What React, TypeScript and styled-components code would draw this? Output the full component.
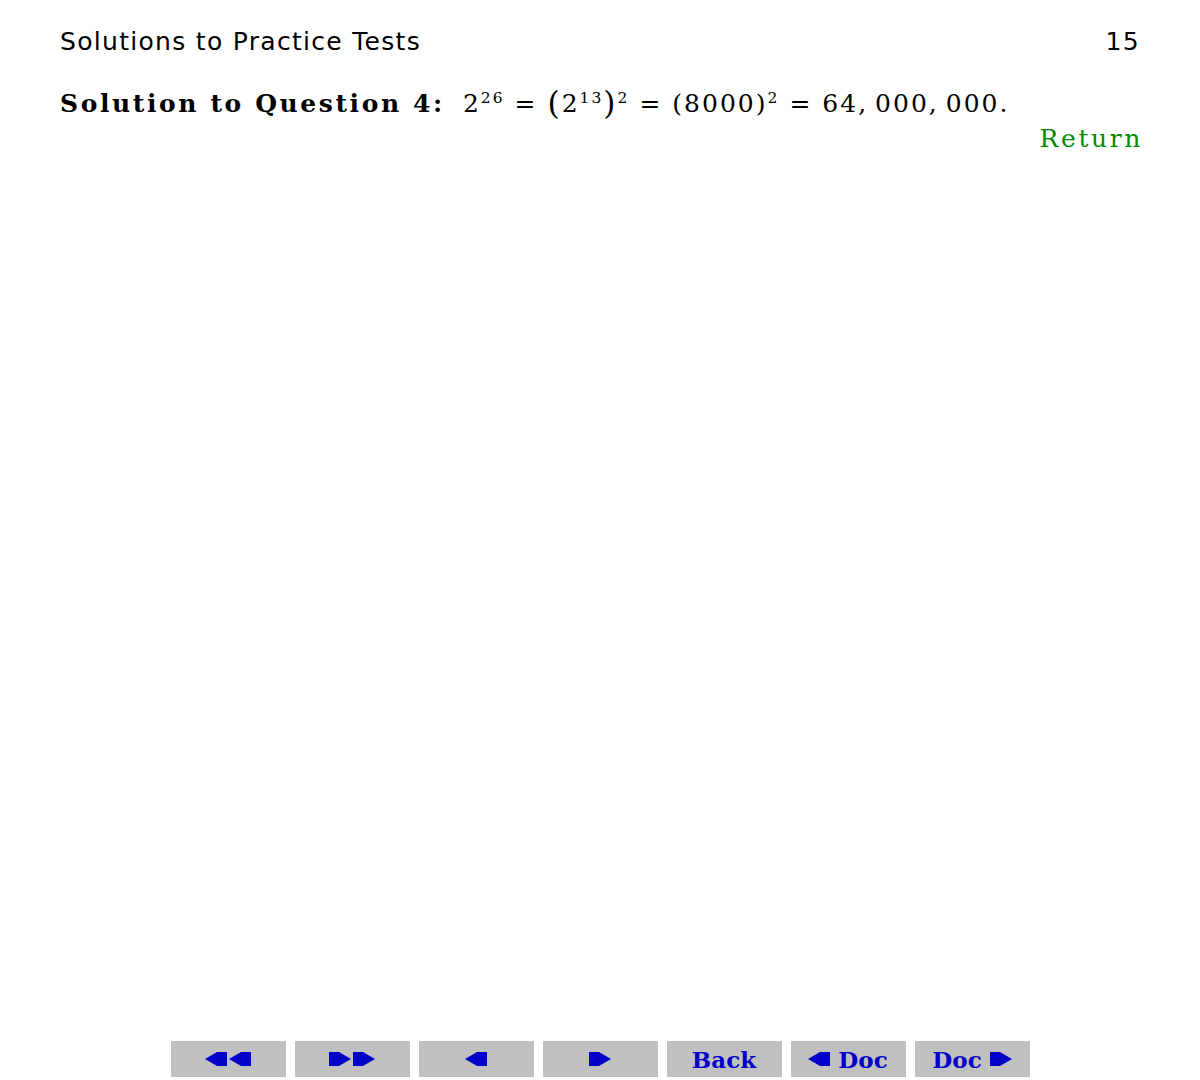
import React from "react";
import styled, { createGlobalStyle } from "styled-components";

const GlobalStyle = createGlobalStyle`
  html, body {
    margin: 0;
    padding: 0;
    background: #ffffff;
  }
`;

const Page = styled.div`
  width: 1200px;
  height: 1080px;
  box-sizing: border-box;
  padding: 27px 60px 3px 60px;
  display: flex;
  flex-direction: column;
  color: #000;
`;

const RunningHead = styled.div`
  display: flex;
  justify-content: space-between;
  align-items: baseline;
  font-family: "DejaVu Sans", "Liberation Sans", sans-serif;
  font-size: 25px;
  line-height: 30px;
  letter-spacing: 1.3px;
`;

const SolutionLine = styled.div`
  margin-top: 28px;
  font-family: "DejaVu Serif", serif;
  font-size: 25px;
  line-height: 36px;
  white-space: nowrap;
`;

const Label = styled.span`
  font-weight: bold;
  letter-spacing: 2.6px;
  margin-right: 18px;
`;

const Math = styled.span`
  letter-spacing: 2px;
`;

const Eq = styled.span`
  margin: 0 10px;
`;

const Sup = styled.sup`
  font-size: 0.62em;
  vertical-align: 0.55em;
  line-height: 0;
`;

const BigParen = styled.span`
  font-size: 1.25em;
  vertical-align: -0.05em;
`;

const ReturnRow = styled.div`
  display: flex;
  justify-content: flex-end;
`;

const ReturnLink = styled.a`
  font-family: "DejaVu Serif", serif;
  font-size: 25px;
  line-height: 34px;
  letter-spacing: 2.6px;
  margin-right: -3px;
  color: #008b00;
  text-decoration: none;
`;

const NavBar = styled.nav`
  margin-top: auto;
  display: flex;
  justify-content: center;
  gap: 9px;
`;

const NavButton = styled.button`
  width: 115px;
  height: 36px;
  border: none;
  background: #c0c0c0;
  color: #0000c8;
  font-family: "DejaVu Serif", serif;
  font-weight: bold;
  font-size: 23px;
  display: flex;
  align-items: center;
  justify-content: center;
  gap: 8px;
  padding: 0;
  cursor: pointer;
`;

const Arrow = ({ dir }: { dir: "left" | "right" }) => (
  <svg width="22" height="16" viewBox="0 0 22 16">
    <polygon
      fill="#0000c8"
      points={dir === "left" ? "0,8 12,1 22,1 22,15 12,15" : "22,8 10,1 0,1 0,15 10,15"}
    />
  </svg>
);

const ArrowPair = styled.span`
  display: flex;
  gap: 2px;
`;

export default function App() {
  return (
    <>
      <GlobalStyle />
      <Page>
        <RunningHead>
          <span>Solutions to Practice Tests</span>
          <span>15</span>
        </RunningHead>
        <SolutionLine>
          <Label>Solution to Question 4:</Label>
          <Math>
            2<Sup>26</Sup>
            <Eq>=</Eq>
            <BigParen>(</BigParen>2<Sup>13</Sup>
            <BigParen>)</BigParen>
            <Sup>2</Sup>
            <Eq>=</Eq>
            (8000)<Sup>2</Sup>
            <Eq>=</Eq>
            64,&thinsp;000,&thinsp;000.
          </Math>
        </SolutionLine>
        <ReturnRow>
          <ReturnLink href="#">Return</ReturnLink>
        </ReturnRow>
        <NavBar>
          <NavButton>
            <ArrowPair>
              <Arrow dir="left" />
              <Arrow dir="left" />
            </ArrowPair>
          </NavButton>
          <NavButton>
            <ArrowPair>
              <Arrow dir="right" />
              <Arrow dir="right" />
            </ArrowPair>
          </NavButton>
          <NavButton>
            <Arrow dir="left" />
          </NavButton>
          <NavButton>
            <Arrow dir="right" />
          </NavButton>
          <NavButton>Back</NavButton>
          <NavButton>
            <Arrow dir="left" />
            Doc
          </NavButton>
          <NavButton>
            Doc
            <Arrow dir="right" />
          </NavButton>
        </NavBar>
      </Page>
    </>
  );
}
